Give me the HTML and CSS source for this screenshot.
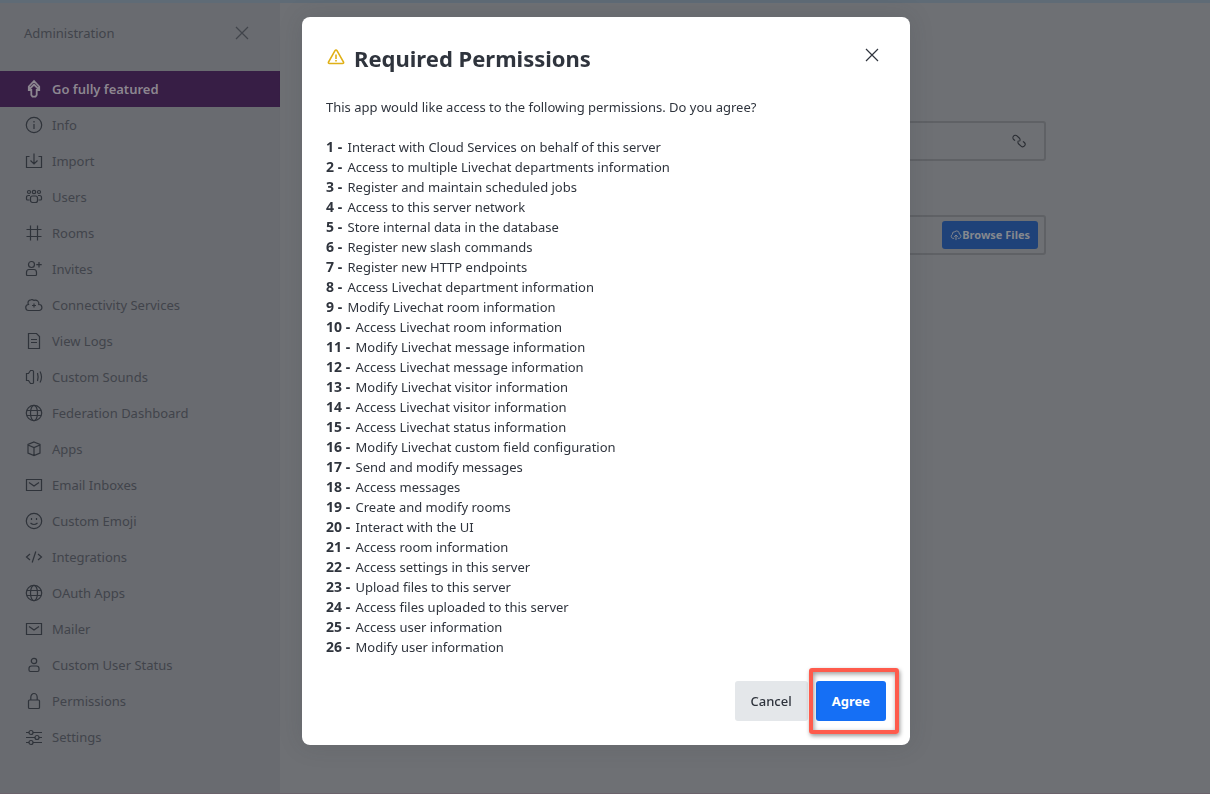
FILE: index.html
```html
<!DOCTYPE html>
<html lang="en">
<head>
<meta charset="utf-8">
<title>Administration</title>
<link rel="stylesheet" href="styles.css">
</head>
<body>
<svg class="sprite" aria-hidden="true">
  <symbol id="close" viewBox="0 0 20 20"><path d="M4 4l12 12M16 4L4 16"/></symbol>
  <symbol id="rocket" viewBox="0 0 20 20"><path d="M10 2L4.800 7.500v3.500h2.500V16l1.200 1.700h3l1.200-1.700V11h2.500V7.500zM5 10.500L10 5.500l5 5"/></symbol>
  <symbol id="info" viewBox="0 0 20 20"><circle cx="10" cy="10" r="7.700"/><path d="M10 9v5M10 6v1.500"/></symbol>
  <symbol id="import" viewBox="0 0 20 20"><path d="M5.500 5.500h-3v11h15v-11h-3M10 2.500v10M6.500 9.500l3.500 3.500 3.500-3.500"/></symbol>
  <symbol id="users" viewBox="0 0 20 20"><circle cx="5" cy="5" r="1.500"/><circle cx="10" cy="5" r="1.700"/><circle cx="15" cy="5" r="1.500"/><rect x="6.500" y="9" width="7" height="6.500" rx="2"/><path d="M6 8.500H4.500Q2.500 8.500 2.500 10.500v1.500q0 1 1 1h2M14 8.500h1.500q2 0 2 2v1.500q0 1-1 1h-2"/></symbol>
  <symbol id="hash" viewBox="0 0 20 20"><path d="M6.500 2.500v15M13.500 2.500v15M2.500 6.500h15M2.500 13.500h15"/></symbol>
  <symbol id="invite" viewBox="0 0 20 20"><circle cx="7.500" cy="5.500" r="3"/><path d="M5 10.500h5q2.500 0 2.500 3v2q0 1-1 1h-8q-1 0-1-1v-2q0-3 2.500-3zM15 3v5.500M12.300 5.700h5.400"/></symbol>
  <symbol id="cloud" viewBox="0 0 20 20"><path d="M5 15.500a3 3 0 0 1-.5-6A3 3 0 0 1 7 4.800q1.600-.6 2.800.6a3.600 3.600 0 0 1 5 4.100 3 3 0 0 1 .2 6zM10 8.500v4M8 10.500h4"/></symbol>
  <symbol id="upload" viewBox="0 0 20 20"><path d="M7 15.500H4.500a3.500 3.500 0 0 1-.5-6.500A4 4 0 0 1 8 4.500a4.500 4.500 0 0 1 7.500 4 3.600 3.600 0 0 1 0 7H13M10 18.500V10M7 13l3-3 3 3"/></symbol>
  <symbol id="doc" viewBox="0 0 20 20"><path d="M4.500 2.500h8l3 3v12h-11v-15zM7 8.500h6M7 11.500h6"/></symbol>
  <symbol id="sound" viewBox="0 0 20 20"><path d="M2.500 6.500h2L6.500 3.500h2q1 0 1 1v11q0 1-1 1H6.500l-2-3h-2zM13.500 6q1.200 4 0 8M16 4.500q3 5.500 0 11"/></symbol>
  <symbol id="globe" viewBox="0 0 20 20"><circle cx="10" cy="10" r="7.700"/><ellipse cx="10" cy="10" rx="3.500" ry="7.700"/><path d="M3 7.500h14M3 12.500h14"/></symbol>
  <symbol id="cube" viewBox="0 0 20 20"><path d="M10 3l6 2.500v8.500l-6 2.500-6-2.500V5.500zM4 6l6 2.500L16 6M10 8.500v8"/></symbol>
  <symbol id="mail" viewBox="0 0 20 20"><path d="M2.500 4.500h15v11h-15zM5 7.500l5 3.500 5-3.500"/></symbol>
  <symbol id="emoji" viewBox="0 0 20 20"><circle cx="10" cy="10" r="7.700"/><path d="M6.500 12q3.500 3 7 0M7.500 7v2M12.500 7v2"/></symbol>
  <symbol id="code" viewBox="0 0 20 20"><path d="M6 7l-3.500 3L6 13M14 7l3.500 3L14 13M11.800 4.500l-3.600 11"/></symbol>
  <symbol id="user" viewBox="0 0 20 20"><circle cx="10" cy="6" r="2.700"/><path d="M7.500 11h5q2.500 0 2.500 2.500v1.500q0 1.500-1.500 1.500h-7q-1.500 0-1.500-1.500v-1.500q0-2.500 2.500-2.500z"/></symbol>
  <symbol id="lock" viewBox="0 0 20 20"><rect x="4.500" y="9" width="11" height="8.500" rx="1"/><path d="M6.800 9V6.500a3.200 4 0 0 1 6.400 0V9"/></symbol>
  <symbol id="sliders" viewBox="0 0 20 20"><path d="M2 5.500h3M9 5.500h9M2 10.500h9M15 10.500h3M2 15.500h3M9 15.500h9"/><circle cx="7" cy="5.500" r="2"/><circle cx="13" cy="10.500" r="2"/><circle cx="7" cy="15.500" r="2"/></symbol>
  <symbol id="link" viewBox="0 0 20 20"><g transform="rotate(42 10 10)"><path d="M6.500 12.700H4.500a2.700 2.700 0 0 1 0-5.400h3.500a2.700 2.700 0 0 1 2.700 2.700M13.500 7.300h2a2.700 2.700 0 0 1 0 5.400h-3.500a2.700 2.700 0 0 1-2.700-2.700"/></g></symbol>
  <symbol id="warning" viewBox="0 0 20 20"><path d="M10 3q.6 0 1 .7l6.500 11.300q.5 1.500-1 1.500h-13q-1.500 0-1-1.500L9 3.700q.4-.7 1-.7zM10 7.500v4.500M10 13v1.500"/></symbol>
</svg>

<div class="page">
  <aside class="sidebar">
    <header class="sidebar-head">
      <span>Administration</span>
      <button class="icon-button" type="button" aria-label="Close administration"><svg class="icon"><use href="#close"/></svg></button>
    </header>
    <nav class="menu">
      <a class="item active" href="#"><svg class="icon"><use href="#rocket"/></svg>Go fully featured</a>
      <a class="item" href="#"><svg class="icon"><use href="#info"/></svg>Info</a>
      <a class="item" href="#"><svg class="icon"><use href="#import"/></svg>Import</a>
      <a class="item" href="#"><svg class="icon"><use href="#users"/></svg>Users</a>
      <a class="item" href="#"><svg class="icon"><use href="#hash"/></svg>Rooms</a>
      <a class="item" href="#"><svg class="icon"><use href="#invite"/></svg>Invites</a>
      <a class="item" href="#"><svg class="icon"><use href="#cloud"/></svg>Connectivity Services</a>
      <a class="item" href="#"><svg class="icon"><use href="#doc"/></svg>View Logs</a>
      <a class="item" href="#"><svg class="icon"><use href="#sound"/></svg>Custom Sounds</a>
      <a class="item" href="#"><svg class="icon"><use href="#globe"/></svg>Federation Dashboard</a>
      <a class="item" href="#"><svg class="icon"><use href="#cube"/></svg>Apps</a>
      <a class="item" href="#"><svg class="icon"><use href="#mail"/></svg>Email Inboxes</a>
      <a class="item" href="#"><svg class="icon"><use href="#emoji"/></svg>Custom Emoji</a>
      <a class="item" href="#"><svg class="icon"><use href="#code"/></svg>Integrations</a>
      <a class="item" href="#"><svg class="icon"><use href="#globe"/></svg>OAuth Apps</a>
      <a class="item" href="#"><svg class="icon"><use href="#mail"/></svg>Mailer</a>
      <a class="item" href="#"><svg class="icon"><use href="#user"/></svg>Custom User Status</a>
      <a class="item" href="#"><svg class="icon"><use href="#lock"/></svg>Permissions</a>
      <a class="item" href="#"><svg class="icon"><use href="#sliders"/></svg>Settings</a>
    </nav>
  </aside>
  <main class="content">
    <form class="form">
      <div class="field"><input class="field-input" type="url" aria-label="App URL"><svg class="icon link"><use href="#link"/></svg></div>
      <div class="field"><input class="field-input" type="text" aria-label="App file"><button class="browse" type="button"><svg class="icon small"><use href="#upload"/></svg>Browse Files</button></div>
    </form>
  </main>
</div>

<div class="backdrop">
  <section class="modal" role="dialog" aria-modal="true" aria-labelledby="title">
    <header class="modal-head">
      <svg class="icon warn"><use href="#warning"/></svg>
      <h1 class="title" id="title">Required Permissions</h1>
      <button class="icon-button" type="button" aria-label="Close"><svg class="icon"><use href="#close"/></svg></button>
    </header>
    <p class="intro">This app would like access to the following permissions. Do you agree?</p>
    <ul class="permissions">
      <li><b>1 -</b> Interact with Cloud Services on behalf of this server</li>
      <li><b>2 -</b> Access to multiple Livechat departments information</li>
      <li><b>3 -</b> Register and maintain scheduled jobs</li>
      <li><b>4 -</b> Access to this server network</li>
      <li><b>5 -</b> Store internal data in the database</li>
      <li><b>6 -</b> Register new slash commands</li>
      <li><b>7 -</b> Register new HTTP endpoints</li>
      <li><b>8 -</b> Access Livechat department information</li>
      <li><b>9 -</b> Modify Livechat room information</li>
      <li><b>10 -</b> Access Livechat room information</li>
      <li><b>11 -</b> Modify Livechat message information</li>
      <li><b>12 -</b> Access Livechat message information</li>
      <li><b>13 -</b> Modify Livechat visitor information</li>
      <li><b>14 -</b> Access Livechat visitor information</li>
      <li><b>15 -</b> Access Livechat status information</li>
      <li><b>16 -</b> Modify Livechat custom field configuration</li>
      <li><b>17 -</b> Send and modify messages</li>
      <li><b>18 -</b> Access messages</li>
      <li><b>19 -</b> Create and modify rooms</li>
      <li><b>20 -</b> Interact with the UI</li>
      <li><b>21 -</b> Access room information</li>
      <li><b>22 -</b> Access settings in this server</li>
      <li><b>23 -</b> Upload files to this server</li>
      <li><b>24 -</b> Access files uploaded to this server</li>
      <li><b>25 -</b> Access user information</li>
      <li><b>26 -</b> Modify user information</li>
    </ul>
    <footer class="actions">
      <button class="button" type="button">Cancel</button>
      <div class="callout"><button class="button primary" type="button">Agree</button></div>
    </footer>
  </section>
</div>
</body>
</html>
```
FILE: styles.css
```css
* { box-sizing: border-box; }
body {
  margin: 0;
  font: 13px/20px "Noto Sans", "Open Sans", sans-serif;
  color: #2f343d;
}
button { font: inherit; cursor: pointer; }
.sprite { display: none; }
.icon {
  width: 20px;
  height: 20px;
  flex: none;
  fill: none;
  stroke: currentColor;
  stroke-width: 1.2;
}
.icon.small { width: 12px; height: 12px; stroke-width: 1.6; }
.icon.link { width: 18px; height: 18px; margin-right: 2px; }
.icon-button {
  display: flex;
  padding: 0;
  border: 0;
  background: none;
  color: inherit;
}

.page {
  display: flex;
  min-height: 100vh;
  border-top: 3px solid #5f6b76;
  border-bottom: 1px solid #6a626b;
  background: #6e7074;
}
.sidebar {
  width: 280px;
  flex: none;
  background: #696b70;
  color: #41444b;
}
.sidebar-head {
  display: flex;
  align-items: center;
  justify-content: space-between;
  height: 60px;
  margin-bottom: 8px;
  padding: 0 28px 0 24px;
}
.item {
  display: flex;
  align-items: center;
  gap: 8px;
  height: 36px;
  padding-left: 24px;
  color: inherit;
  text-decoration: none;
}
.item .icon { color: #2f333a; }
.item.active { background: #371e45; color: #8c8690; font-weight: 600; }
.item.active .icon { color: #8c8690; stroke-width: 1.8; }

.content { flex: 1; padding: 118px 164px 0 24px; }
.form { display: grid; gap: 54px; }
.field {
  display: flex;
  align-items: center;
  height: 40px;
  padding-right: 14px;
  border: 2px solid #5f6165;
  border-radius: 3px;
  color: #2a2d33;
}
.field:last-child { padding-right: 6px; }
.field-input { flex: 1; min-width: 0; border: 0; background: none; outline: 0; }
.browse {
  display: flex;
  align-items: center;
  height: 28px;
  padding: 0 8px;
  border: 0;
  border-radius: 3px;
  background: #1f4279;
  color: #85888e;
  font-size: 11px;
  font-weight: 700;
}

.backdrop {
  position: fixed;
  inset: 0;
  display: flex;
  justify-content: center;
  align-items: flex-start;
  padding: 17px 15px 17px 17px;
}
.modal {
  width: 100%;
  max-width: 608px;
  padding: 24px;
  border-radius: 8px;
  background: #fff;
  box-shadow: 0 0 24px rgba(47, 52, 61, 0.15);
}
.modal-head {
  display: flex;
  align-items: center;
  gap: 8px;
  height: 36px;
  margin-bottom: 20px;
}
.modal-head .icon-button { margin: 0 4px 8px 0; }
.warn { margin-bottom: 4px; color: #e0b016; stroke-width: 1.6; }
.title { flex: 1; margin: 0 0 2px; font-size: 22px; line-height: 32px; font-weight: 700; }
.intro { margin: 0 0 20px; }
.permissions { margin: 0; padding: 0; list-style: none; }
.permissions li { height: 20px; }
.permissions b { margin-right: 2px; font-size: 14px; }
.actions {
  display: flex;
  justify-content: flex-end;
  gap: 8px;
  margin-top: 24px;
}
.button {
  height: 40px;
  padding: 0 16px;
  border: 0;
  border-radius: 3px;
  background: #e4e7ea;
  color: #2f343d;
  font-weight: 500;
}
.primary { background: #156ff5; color: #fff; font-weight: 700; }
.callout { position: relative; }
.callout::after {
  content: "";
  position: absolute;
  inset: -13px -13px -13px -7px;
  border: 4px solid #fe5b4c;
  border-radius: 3px;
  box-shadow: 1px 2px 4px rgba(0, 0, 0, 0.4), inset 1px 2px 5px rgba(0, 0, 0, 0.4);
  pointer-events: none;
}
```
